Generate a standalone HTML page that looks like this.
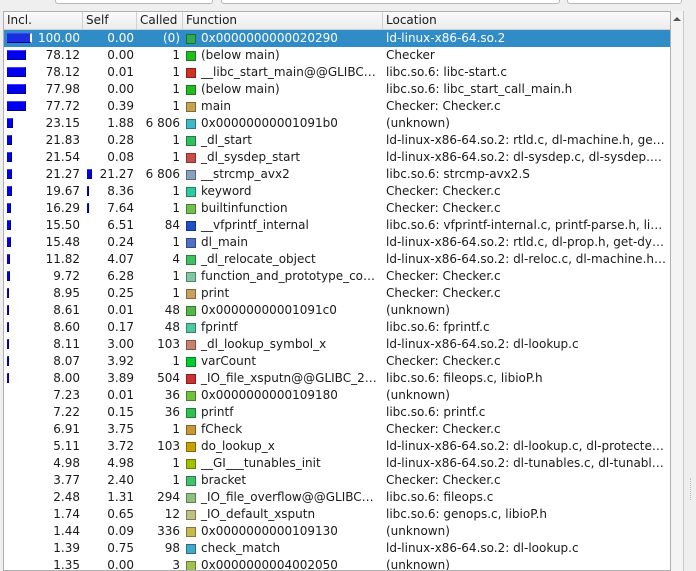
<!DOCTYPE html>
<html><head><meta charset="utf-8"><style>
*{margin:0;padding:0;box-sizing:border-box}
body{width:696px;height:565px;overflow:hidden;background:#efefef;font-family:"DejaVu Sans","Liberation Sans",sans-serif;font-size:12px;color:#1a1a1a;position:relative}
.tf{position:absolute;top:-6px;height:10px;border:1px solid #b8b8b8;border-radius:3px;background:#fff}
.tbl{position:absolute;left:3px;top:11px;width:668px;height:560px;background:#fff;border:1px solid #b0b0b0;overflow:hidden}
.hd{position:absolute;left:0;top:0;width:100%;height:18px;background:linear-gradient(#fafafa,#ececec);border-bottom:1px solid #d0d0d0}
.hd span{position:absolute;top:0;height:18px;line-height:17px;padding-left:3px;border-right:1px solid #d0d0d0}
.r{position:absolute;left:0;width:100%;height:17px;line-height:17px;white-space:nowrap}
.r span{position:absolute;top:0}
.sel{background:#308cc6;color:#fff}
.n1{right:590px}.n2{right:536px}.n3{right:490px}
.fn{left:197px}.lo{left:382px}
.sq{position:absolute;left:182px;top:4px;width:10px;height:10px;border:1px solid rgba(0,0,0,.35)}
.b{position:absolute;left:3px;top:3px;height:10px;background:#0000ee;border-top:1px solid #4040ff;border-bottom:1px solid #000090;border-right:1px solid #000080}
.b2{left:83px}
.sb{position:absolute;left:671px;top:11px;width:13px;height:560px;background:#f4f4f4;border-right:1px solid #c8c8c8}
</style></head><body>
<div class="tf" style="left:55px;width:158px"></div>
<div class="tf" style="left:221px;width:339px"></div>
<div class="tf" style="left:567px;width:115px"></div>
<div class="tbl">
<div class="hd"><span style="left:0;width:79px">Incl.</span><span style="left:79px;width:54px">Self</span><span style="left:133px;width:46px">Called</span><span style="left:179px;width:200px">Function</span><span style="left:379px;width:290px;border-right:none">Location</span></div>

<div class="r sel" style="top:18px"><i class="b" style="width:25px;background:#1a2ee0;border-right:2px solid #fff"></i><span class="n1">100.00</span><span class="n2">0.00</span><span class="n3">(0)</span><i class="sq" style="background:#2eaa50"></i><span class="fn">0x0000000000020290</span><span class="lo">ld-linux-x86-64.so.2</span></div>
<div class="r" style="top:35px"><i class="b" style="width:19px"></i><span class="n1">78.12</span><span class="n2">0.00</span><span class="n3">1</span><i class="sq" style="background:#22bb22"></i><span class="fn">(below main)</span><span class="lo">Checker</span></div>
<div class="r" style="top:52px"><i class="b" style="width:19px"></i><span class="n1">78.12</span><span class="n2">0.01</span><span class="n3">1</span><i class="sq" style="background:#cc3322"></i><span class="fn">__libc_start_main@@GLIBC…</span><span class="lo">libc.so.6: libc-start.c</span></div>
<div class="r" style="top:69px"><i class="b" style="width:19px"></i><span class="n1">77.98</span><span class="n2">0.00</span><span class="n3">1</span><i class="sq" style="background:#22bb22"></i><span class="fn">(below main)</span><span class="lo">libc.so.6: libc_start_call_main.h</span></div>
<div class="r" style="top:86px"><i class="b" style="width:19px"></i><span class="n1">77.72</span><span class="n2">0.39</span><span class="n3">1</span><i class="sq" style="background:#c8a050"></i><span class="fn">main</span><span class="lo">Checker: Checker.c</span></div>
<div class="r" style="top:103px"><i class="b" style="width:6px"></i><span class="n1">23.15</span><span class="n2">1.88</span><span class="n3">6 806</span><i class="sq" style="background:#40b8c8"></i><span class="fn">0x00000000001091b0</span><span class="lo">(unknown)</span></div>
<div class="r" style="top:120px"><i class="b" style="width:5px"></i><span class="n1">21.83</span><span class="n2">0.28</span><span class="n3">1</span><i class="sq" style="background:#30c060"></i><span class="fn">_dl_start</span><span class="lo">ld-linux-x86-64.so.2: rtld.c, dl-machine.h, ge…</span></div>
<div class="r" style="top:137px"><i class="b" style="width:5px"></i><span class="n1">21.54</span><span class="n2">0.08</span><span class="n3">1</span><i class="sq" style="background:#c85048"></i><span class="fn">_dl_sysdep_start</span><span class="lo">ld-linux-x86-64.so.2: dl-sysdep.c, dl-sysdep.…</span></div>
<div class="r" style="top:154px"><i class="b" style="width:5px"></i><i class="b b2" style="width:5px"></i><span class="n1">21.27</span><span class="n2">21.27</span><span class="n3">6 806</span><i class="sq" style="background:#88a0c0"></i><span class="fn">__strcmp_avx2</span><span class="lo">libc.so.6: strcmp-avx2.S</span></div>
<div class="r" style="top:171px"><i class="b" style="width:5px"></i><i class="b b2" style="width:2px"></i><span class="n1">19.67</span><span class="n2">8.36</span><span class="n3">1</span><i class="sq" style="background:#30c8a0"></i><span class="fn">keyword</span><span class="lo">Checker: Checker.c</span></div>
<div class="r" style="top:188px"><i class="b" style="width:4px"></i><i class="b b2" style="width:2px"></i><span class="n1">16.29</span><span class="n2">7.64</span><span class="n3">1</span><i class="sq" style="background:#70c050"></i><span class="fn">builtinfunction</span><span class="lo">Checker: Checker.c</span></div>
<div class="r" style="top:205px"><i class="b" style="width:4px"></i><span class="n1">15.50</span><span class="n2">6.51</span><span class="n3">84</span><i class="sq" style="background:#2050c8"></i><span class="fn">__vfprintf_internal</span><span class="lo">libc.so.6: vfprintf-internal.c, printf-parse.h, li…</span></div>
<div class="r" style="top:222px"><i class="b" style="width:4px"></i><span class="n1">15.48</span><span class="n2">0.24</span><span class="n3">1</span><i class="sq" style="background:#5070c8"></i><span class="fn">dl_main</span><span class="lo">ld-linux-x86-64.so.2: rtld.c, dl-prop.h, get-dy…</span></div>
<div class="r" style="top:239px"><i class="b" style="width:3px"></i><span class="n1">11.82</span><span class="n2">4.07</span><span class="n3">4</span><i class="sq" style="background:#40c060"></i><span class="fn">_dl_relocate_object</span><span class="lo">ld-linux-x86-64.so.2: dl-reloc.c, dl-machine.h…</span></div>
<div class="r" style="top:256px"><i class="b" style="width:3px"></i><span class="n1">9.72</span><span class="n2">6.28</span><span class="n3">1</span><i class="sq" style="background:#80c8a0"></i><span class="fn">function_and_prototype_co…</span><span class="lo">Checker: Checker.c</span></div>
<div class="r" style="top:273px"><i class="b" style="width:2px"></i><span class="n1">8.95</span><span class="n2">0.25</span><span class="n3">1</span><i class="sq" style="background:#c8a060"></i><span class="fn">print</span><span class="lo">Checker: Checker.c</span></div>
<div class="r" style="top:290px"><i class="b" style="width:2px"></i><span class="n1">8.61</span><span class="n2">0.01</span><span class="n3">48</span><i class="sq" style="background:#50b848"></i><span class="fn">0x00000000001091c0</span><span class="lo">(unknown)</span></div>
<div class="r" style="top:307px"><i class="b" style="width:2px"></i><span class="n1">8.60</span><span class="n2">0.17</span><span class="n3">48</span><i class="sq" style="background:#50c8a0"></i><span class="fn">fprintf</span><span class="lo">libc.so.6: fprintf.c</span></div>
<div class="r" style="top:324px"><i class="b" style="width:2px"></i><span class="n1">8.11</span><span class="n2">3.00</span><span class="n3">103</span><i class="sq" style="background:#c88070"></i><span class="fn">_dl_lookup_symbol_x</span><span class="lo">ld-linux-x86-64.so.2: dl-lookup.c</span></div>
<div class="r" style="top:341px"><i class="b" style="width:2px"></i><span class="n1">8.07</span><span class="n2">3.92</span><span class="n3">1</span><i class="sq" style="background:#00cc30"></i><span class="fn">varCount</span><span class="lo">Checker: Checker.c</span></div>
<div class="r" style="top:358px"><i class="b" style="width:2px"></i><span class="n1">8.00</span><span class="n2">3.89</span><span class="n3">504</span><i class="sq" style="background:#cc3030"></i><span class="fn">_IO_file_xsputn@@GLIBC_2…</span><span class="lo">libc.so.6: fileops.c, libioP.h</span></div>
<div class="r" style="top:375px"><span class="n1">7.23</span><span class="n2">0.01</span><span class="n3">36</span><i class="sq" style="background:#70c040"></i><span class="fn">0x0000000000109180</span><span class="lo">(unknown)</span></div>
<div class="r" style="top:392px"><span class="n1">7.22</span><span class="n2">0.15</span><span class="n3">36</span><i class="sq" style="background:#30c050"></i><span class="fn">printf</span><span class="lo">libc.so.6: printf.c</span></div>
<div class="r" style="top:409px"><span class="n1">6.91</span><span class="n2">3.75</span><span class="n3">1</span><i class="sq" style="background:#c89838"></i><span class="fn">fCheck</span><span class="lo">Checker: Checker.c</span></div>
<div class="r" style="top:426px"><span class="n1">5.11</span><span class="n2">3.72</span><span class="n3">103</span><i class="sq" style="background:#c8a000"></i><span class="fn">do_lookup_x</span><span class="lo">ld-linux-x86-64.so.2: dl-lookup.c, dl-protecte…</span></div>
<div class="r" style="top:443px"><span class="n1">4.98</span><span class="n2">4.98</span><span class="n3">1</span><i class="sq" style="background:#a0c000"></i><span class="fn">__GI___tunables_init</span><span class="lo">ld-linux-x86-64.so.2: dl-tunables.c, dl-tunabl…</span></div>
<div class="r" style="top:460px"><span class="n1">3.77</span><span class="n2">2.40</span><span class="n3">1</span><i class="sq" style="background:#40c070"></i><span class="fn">bracket</span><span class="lo">Checker: Checker.c</span></div>
<div class="r" style="top:477px"><span class="n1">2.48</span><span class="n2">1.31</span><span class="n3">294</span><i class="sq" style="background:#90c080"></i><span class="fn">_IO_file_overflow@@GLIBC…</span><span class="lo">libc.so.6: fileops.c</span></div>
<div class="r" style="top:494px"><span class="n1">1.74</span><span class="n2">0.65</span><span class="n3">12</span><i class="sq" style="background:#c0c080"></i><span class="fn">_IO_default_xsputn</span><span class="lo">libc.so.6: genops.c, libioP.h</span></div>
<div class="r" style="top:511px"><span class="n1">1.44</span><span class="n2">0.09</span><span class="n3">336</span><i class="sq" style="background:#c8b850"></i><span class="fn">0x0000000000109130</span><span class="lo">(unknown)</span></div>
<div class="r" style="top:528px"><span class="n1">1.39</span><span class="n2">0.75</span><span class="n3">98</span><i class="sq" style="background:#40a8c8"></i><span class="fn">check_match</span><span class="lo">ld-linux-x86-64.so.2: dl-lookup.c</span></div>
<div class="r" style="top:545px"><span class="n1">1.35</span><span class="n2">0.00</span><span class="n3">3</span><i class="sq" style="background:#a0c050"></i><span class="fn">0x0000000004002050</span><span class="lo">(unknown)</span></div>
</div>
<div class="sb"><div style="position:absolute;left:2px;top:6px;width:0;height:0;border-left:4px solid transparent;border-right:4px solid transparent;border-bottom:4px solid #555"></div></div>
<div style="position:absolute;left:690px;top:478px;height:22px;border-left:1px dotted #bbb"></div>
</body></html>
